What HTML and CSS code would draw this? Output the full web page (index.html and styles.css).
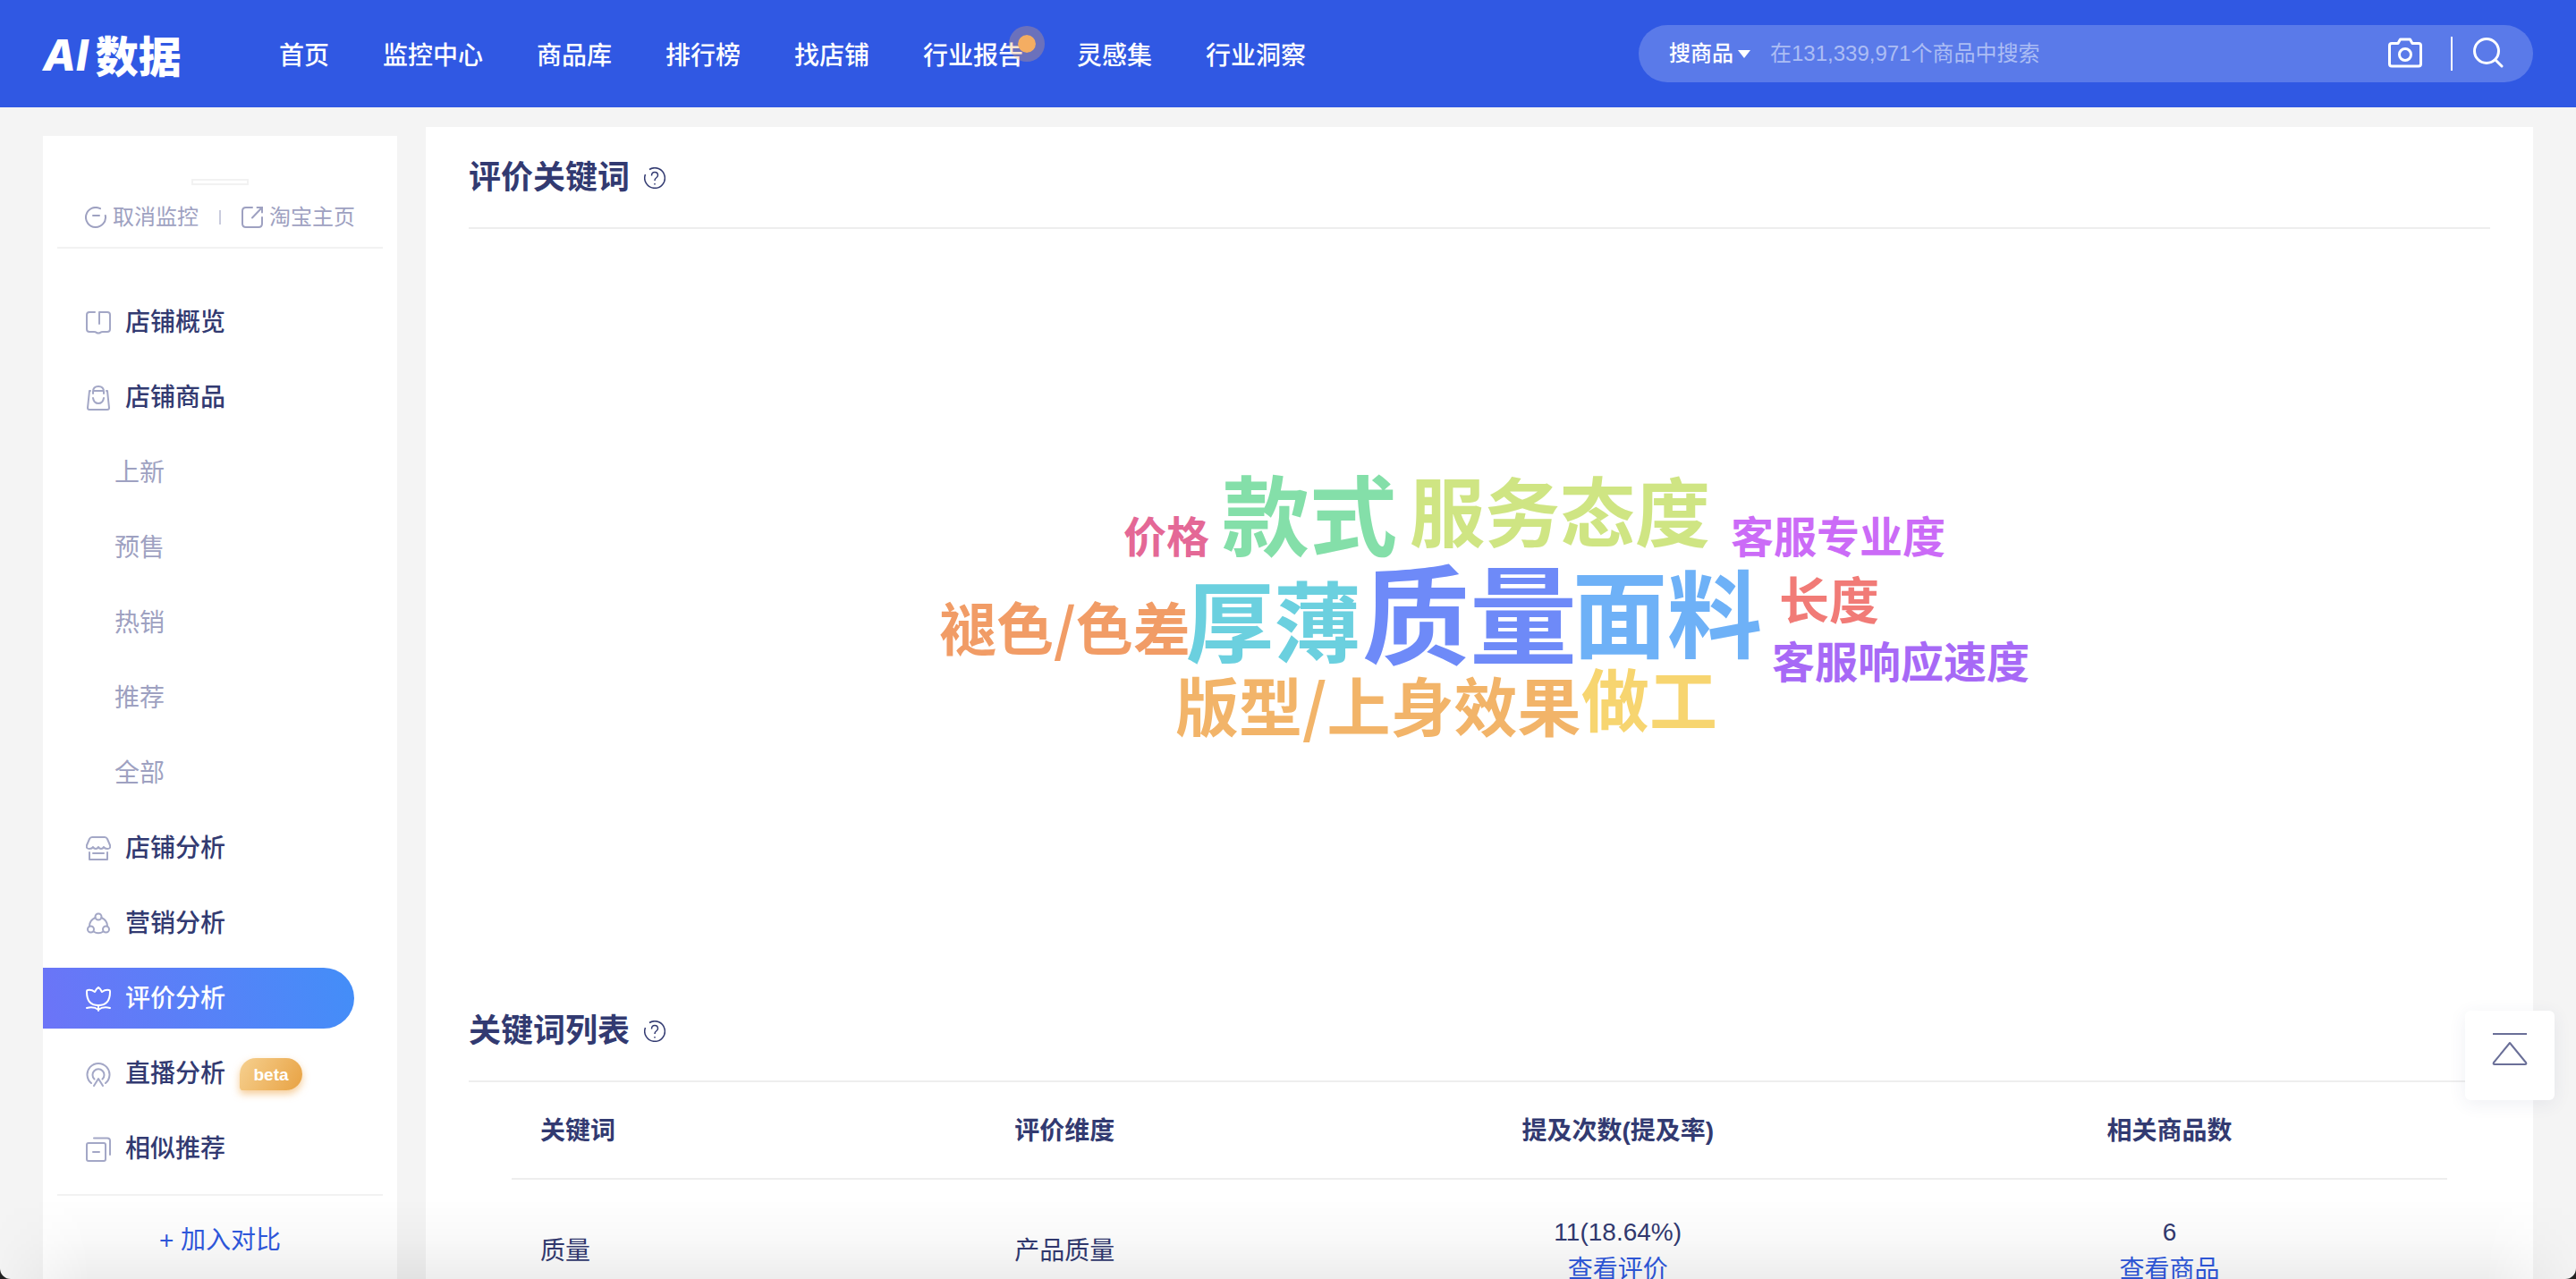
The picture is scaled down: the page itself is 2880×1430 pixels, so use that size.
FILE: index.html
```html
<!DOCTYPE html>
<html lang="zh-CN">
	<head>
		<title>AI数据 - 评价分析</title>
		<meta charset="utf-8" />
		<meta name="viewport" content="width=device-width, initial-scale=1" />
		<link rel="stylesheet" href="styles.css">
	</head>
	<body>
		<div class="app">
			<header class="header">
				<a class="logo" href="#"><span class="logo-ai">AI</span><span class="logo-cn">数据</span></a>
				<nav class="nav">
					<a href="#">首页</a>
					<a href="#">监控中心</a>
					<a href="#">商品库</a>
					<a href="#">排行榜</a>
					<a href="#">找店铺</a>
					<a class="has-dot" href="#">行业报告</a>
					<a href="#">灵感集</a>
					<a href="#">行业洞察</a>
				</nav>
				<form class="search">
					<label class="search-type">
						<select aria-label="搜索类型">
							<option>搜商品</option>
						</select>
						<svg width="14" height="9" viewBox="0 0 14 9"><path d="M0 0h14L7 9z" fill="#fff"/></svg>
					</label>
					<input type="text" aria-label="搜索" placeholder="在131,339,971个商品中搜索">
					<button class="camera" type="button" aria-label="图片搜索">
						<svg width="38" height="34" viewBox="0 0 38 34" fill="none" stroke="#fff" stroke-width="3" stroke-linejoin="round"><path d="M4 6.500h7L13.500 2h11L27 6.500h7q2.500 0 2.500 2.500v20.500q0 2.500-2.500 2.500H4q-2.500 0-2.500-2.500V9q0-2.500 2.500-2.500z"/><circle cx="19" cy="19" r="6.500"/></svg>
					</button>
					<button class="submit" type="submit" aria-label="搜索">
						<svg width="36" height="36" viewBox="0 0 36 36" fill="none" stroke="#fff" stroke-width="3" stroke-linecap="round"><circle cx="16" cy="16" r="13.500"/><path d="M26 26l7 7"/></svg>
					</button>
				</form>
			</header>

			<div class="layout">
				<aside class="sidebar">
					<div class="shop-tag"></div>
					<div class="shop-actions">
						<button type="button">
							<svg width="24" height="24" viewBox="0 0 24 24" fill="none" stroke="currentColor" stroke-width="2" stroke-linecap="round"><path d="M17 2.200A11 11 0 1 0 22.800 10M9 10h7"/></svg>
							取消监控
						</button>
						<i class="sep"></i>
						<a href="#">
							<svg width="24" height="24" viewBox="0 0 24 24" fill="none" stroke="currentColor" stroke-width="2" stroke-linecap="round"><path d="M12 1H5Q1 1 1 5v14q0 4 4 4h14q4 0 4-4v-7M17.500 1H23v5.500M23 1L12 12.500"/></svg>
							淘宝主页
						</a>
					</div>
					<ul class="menu">
						<li><a href="#">
							<svg width="28" height="28" viewBox="0 0 28 28"><path d="M10 2H4Q1 2 1 5v16q0 3 3 3h5q2 0 3 1 2 1 4 0 1-1 3-1h5q3 0 3-3V5q0-3-3-3h-9v13"/></svg>
							店铺概览</a></li>
						<li><a href="#">
							<svg width="28" height="28" viewBox="0 0 28 28"><path d="M5 6H4L2 25q0 2 2 2h20q2 0 2-2L24 6h-1M8 9V7q0-6 6-6t6 6v2M9 6h10M8 14q1 6 6 6t6-6"/></svg>
							店铺商品</a></li>
						<li class="sub"><a href="#">上新</a></li>
						<li class="sub"><a href="#">预售</a></li>
						<li class="sub"><a href="#">热销</a></li>
						<li class="sub"><a href="#">推荐</a></li>
						<li class="sub"><a href="#">全部</a></li>
						<li><a href="#">
							<svg width="28" height="28" viewBox="0 0 28 28"><path d="M7 1h14q2 0 3 2l3 7q1 4-3 4-3 0-4-2-1 2-3 2t-3-2q-1 2-3 2t-3-2q-1 2-4 2-4 0-3-4l3-7q1-2 3-2zM4 18v8h20v-8M8 19h12"/></svg>
							店铺分析</a></li>
						<li><a href="#">
							<svg width="28" height="28" viewBox="0 0 28 28"><circle cx="14" cy="6" r="3.500"/><circle cx="5.500" cy="20" r="3.500"/><circle cx="22.500" cy="20" r="3.500"/><path d="M10.500 7Q4 10 4 16.500M17.500 7Q24 10 24 16.500M8.500 22.500Q14 26 19.500 22.500"/></svg>
							营销分析</a></li>
						<li class="active"><a href="#">
							<svg width="28" height="28" viewBox="0 0 28 28"><path d="M14 1q2 1 4 5 4-3 8-2 1 0 1 2c0 10-5 15-13 15S1 16 1 6q0-2 1-2 4-1 8 2 2-4 4-5zM14 21v6M1 24q8-2 13 2 5-4 13-2"/></svg>
							评价分析</a></li>
						<li><a href="#">
							<svg width="28" height="28" viewBox="0 0 28 28"><path d="M6 24A12.500 12.500 0 1 1 22 24M9.500 19.500A6.500 6.500 0 1 1 18.500 19.500M9 27l5-8 5 8"/></svg>
							直播分析<span class="beta">beta</span></a></li>
						<li><a href="#">
							<svg width="28" height="28" viewBox="0 0 28 28"><rect x="1" y="7" width="21" height="20" rx="2"/><path d="M9 1.500h15q3 0 3 3V20M8 17h7"/></svg>
							相似推荐</a></li>
					</ul>
					<button class="compare" type="button">+ 加入对比</button>
				</aside>

				<main class="main">
					<section>
						<h2>评价关键词
							<svg width="24" height="24" viewBox="0 0 24 24"><path d="M6 2.500A11.300 11.300 0 1 1 1.500 8M8.500 9.500q0-4 3.500-4t3.500 3.500q0 1.500-2 3-1.500 1-1.500 3M12 18v1.500"/></svg>
						</h2>
						<div class="cloud">
							<!-- free placed words, biggest = most mentioned -->
							<div class="cloud-stage">
								<span class="word w1">质量</span>
								<span class="word w2">面料</span>
								<span class="word w3">厚薄</span>
								<span class="word w4">款式</span>
								<span class="word w5">服务态度</span>
								<span class="word w6">做工</span>
								<span class="word w7">版型/上身效果</span>
								<span class="word w8">褪色/色差</span>
								<span class="word w9">长度</span>
								<span class="word w10">价格</span>
								<span class="word w11">客服专业度</span>
								<span class="word w12">客服响应速度</span>
							</div>
						</div>
					</section>
					<section>
						<h2>关键词列表
							<svg width="24" height="24" viewBox="0 0 24 24"><path d="M6 2.500A11.300 11.300 0 1 1 1.500 8M8.500 9.500q0-4 3.500-4t3.500 3.500q0 1.500-2 3-1.500 1-1.500 3M12 18v1.500"/></svg>
						</h2>
						<div class="table-wrap">
							<table>
								<thead>
									<tr>
										<th class="col-word">关键词</th>
										<th class="col-dim">评价维度</th>
										<th class="col-count">提及次数(提及率)</th>
										<th class="col-goods">相关商品数</th>
									</tr>
								</thead>
								<tbody>
									<tr>
										<td>质量</td>
										<td>产品质量</td>
										<td>11(18.64%)<a href="#">查看评价</a></td>
										<td>6<a href="#">查看商品</a></td>
									</tr>
								</tbody>
							</table>
						</div>
					</section>
				</main>
			</div>

			<button class="to-top" type="button" aria-label="回到顶部">
				<svg width="40" height="38" viewBox="0 0 40 38" fill="none" stroke="#6a6f98" stroke-width="2" stroke-linejoin="round"><path d="M1 2h38M20 12L38 34q1 2-1 2H3q-2 0-1-2z"/></svg>
			</button>
		</div>
	</body>
</html>
```
FILE: styles.css
```css
* {
	box-sizing: border-box;
}
html {
	background: #222;
}
body {
	margin: 0;
	overflow: hidden;
	font-family: "Liberation Sans", "Noto Sans CJK SC", sans-serif;
	font-size: 28px;
	line-height: 40px;
	color: #323a71;
}
a {
	color: inherit;
	text-decoration: none;
}
button, select, input {
	margin: 0;
	padding: 0;
	border: 0;
	background: none;
	font: inherit;
	color: inherit;
}
svg {
	flex: none;
}
.app {
	position: relative;
	height: 100vh;
	overflow: hidden;
	background: #f4f4f4;
	border-radius: 0 0 12px 12px;
}
/* soft fade on the bottom edge of the window */
.app::after {
	content: "";
	position: absolute;
	left: 0;
	right: 0;
	bottom: 0;
	height: 90px;
	background: linear-gradient(rgba(0,0,0,0), rgba(0,0,0,0.025) 50%, rgba(0,0,0,0.07));
	mask-image: linear-gradient(90deg, rgba(0,0,0,0.1), #000 100px, #000 calc(100% - 100px), rgba(0,0,0,0.1));
	pointer-events: none;
}

.header {
	display: flex;
	align-items: center;
	height: 120px;
	padding: 0 48px;
	background: #3058e3;
	color: #fff;
}
.logo {
	display: flex;
	align-items: center;
	gap: 8px;
	width: 264px;
	line-height: 60px;
}
.logo-ai {
	padding-top: 4px;
	font-family: Inter, "Liberation Sans", sans-serif;
	font-size: 48px;
	font-weight: 800;
	font-style: italic;
}
.logo-cn {
	font-family: "Noto Sans CJK SC", sans-serif;
	font-size: 48px;
	font-weight: 900;
}
.nav {
	display: flex;
	gap: 60px;
	padding-top: 6px;
	font-weight: 500;
}
.has-dot {
	position: relative;
}
.has-dot::after {
	content: "";
	position: absolute;
	top: -14px;
	right: -24px;
	width: 20px;
	height: 20px;
	border: 10px solid rgba(244,173,98,0.3);
	border-radius: 50%;
	background: #f4ad62;
	background-clip: padding-box;
	box-sizing: content-box;
}
.search {
	display: flex;
	align-items: center;
	flex: 0 1 1000px;
	height: 64px;
	margin-left: auto;
	padding: 0 32px 0 34px;
	border-radius: 32px;
	background: #5a7ae9;
	font-size: 24px;
}
.search-type {
	display: flex;
	align-items: center;
	gap: 5px;
}
.search select {
	appearance: none;
	font-weight: 500;
}
.search input {
	flex: 1;
	min-width: 0;
	margin-left: 22px;
	outline: none;
}
.search input::placeholder {
	color: #acbdf4;
	opacity: 1;
}
.search button {
	display: flex;
	padding-bottom: 2px;
}
.search .submit {
	margin-left: 32px;
	padding-left: 22px;
	border-left: 2px solid #fff;
}

.layout {
	display: flex;
	align-items: flex-start;
	gap: 32px;
	padding: 22px 48px 0;
}
.sidebar {
	flex: 0 0 396px;
	margin-top: 10px;
	padding-top: 48px;
	background: #fff;
	min-height: 1300px;
}
.shop-tag {
	width: 64px;
	height: 7px;
	margin: 0 auto;
	border: 2px solid #f2f2f2;
}
.shop-actions {
	display: flex;
	align-items: center;
	justify-content: center;
	height: 71px;
	margin: 0 16px;
	padding-top: 2px;
	border-bottom: 2px solid #f2f2f2;
	font-size: 24px;
	color: #9ea1c1;
}
.shop-actions button,
.shop-actions a {
	display: flex;
	align-items: center;
	gap: 7px;
}
.sep {
	width: 2px;
	height: 16px;
	margin: 0 23px;
	background: #c9cbdd;
}
.menu {
	margin: 0 16px;
	padding: 40px 0 9px;
	list-style: none;
	border-bottom: 2px solid #f2f2f2;
	font-weight: 500;
}
.menu li {
	margin: 0 32px 0 -16px;
	padding: 8px 0;
}
.menu a {
	display: flex;
	align-items: center;
	height: 68px;
	padding: 2px 0 0 48px;
	border-radius: 0 34px 34px 0;
}
.menu svg {
	margin-right: 16px;
	fill: none;
	stroke: #a3a7c6;
	stroke-width: 2;
	stroke-linecap: round;
	stroke-linejoin: round;
}
.menu .sub a {
	padding-left: 80px;
	color: #9ea1c1;
	font-weight: 400;
}
.menu .active a {
	background: linear-gradient(75deg, #6c74f7, #438ef8);
	color: #fff;
}
.menu .active svg {
	stroke: #fff;
}
.beta {
	width: 70px;
	height: 36px;
	margin-left: 16px;
	border-radius: 20px 20px 20px 4px;
	background: linear-gradient(120deg, #f6d08f, #e8a243);
	box-shadow: 0 4px 8px rgba(240,170,80,0.6);
	color: #fff;
	font-size: 19px;
	font-weight: bold;
	line-height: 38px;
	text-align: center;
}
.compare {
	display: block;
	width: 100%;
	padding: 30px 0;
	color: #2f59df;
}

.main {
	flex: 1;
	min-width: 0;
	min-height: 1300px;
	padding: 0 48px;
	background: #fff;
}
h2 {
	display: flex;
	align-items: center;
	gap: 16px;
	height: 114px;
	margin: 0;
	padding-top: 2px;
	border-bottom: 2px solid #eee;
	font-size: 36px;
	font-weight: bold;
}
h2 svg {
	fill: none;
	stroke: #323a71;
	stroke-width: 1.500;
}
.cloud {
	display: flex;
	justify-content: center;
	align-items: center;
	height: 840px;
}
.cloud-stage {
	position: relative;
	flex: none;
	width: 1220px;
	height: 312px;
}
.word {
	position: absolute;
	line-height: 1;
	font-family: "Noto Sans CJK SC", sans-serif;
	font-weight: bold;
	white-space: nowrap;
}
.w1 { left: 479px; top: 102px; font-size: 120px; color: #6e8af8; }
.w2 { left: 714px; top: 108px; font-size: 106px; color: #6eb1f7; }
.w3 { left: 282px; top: 121px; font-size: 98px; color: #6bd0df; }
.w4 { left: 322px; top: 2px; font-size: 98px; color: #84dfa9; }
.w5 { left: 532px; top: 7px; font-size: 84px; color: #cfe583; }
.w6 { left: 724px; top: 221px; font-size: 76px; color: #f7d570; }
.w7 { left: 270px; top: 231px; font-size: 71px; color: #f2b469; }
.w8 { left: 6px; top: 147px; font-size: 64px; color: #f19c66; }
.w9 { left: 945px; top: 120px; font-size: 56px; color: #f17b77; }
.w10 { left: 212px; top: 53px; font-size: 48px; color: #e46896; }
.w11 { left: 891px; top: 53px; font-size: 48px; color: #cb6bf7; }
.w12 { left: 937px; top: 193px; font-size: 48px; color: #a769f6; }

.table-wrap {
	padding: 0 48px;
}
table {
	width: 100%;
	table-layout: fixed;
	border-collapse: collapse;
}
th {
	height: 108px;
	padding: 2px 32px 0;
	border-bottom: 2px solid #eee;
	font-weight: bold;
	text-align: left;
}
td {
	padding: 38px 32px;
	line-height: 42px;
}
td a {
	display: block;
	color: #2f59df;
}
.col-word {
	width: 24.5%;
}
.col-dim {
	width: 18.5%;
}
.col-count {
	width: 28.3%;
}
th:nth-child(n+3),
td:nth-child(n+3) {
	text-align: center;
}

.to-top {
	position: absolute;
	right: 24px;
	bottom: 200px;
	display: flex;
	align-items: center;
	justify-content: center;
	width: 100px;
	height: 100px;
	padding-bottom: 14px;
	border-radius: 6px;
	background: #fff;
	box-shadow: 0 4px 20px rgba(50,58,113,0.08);
}
```
